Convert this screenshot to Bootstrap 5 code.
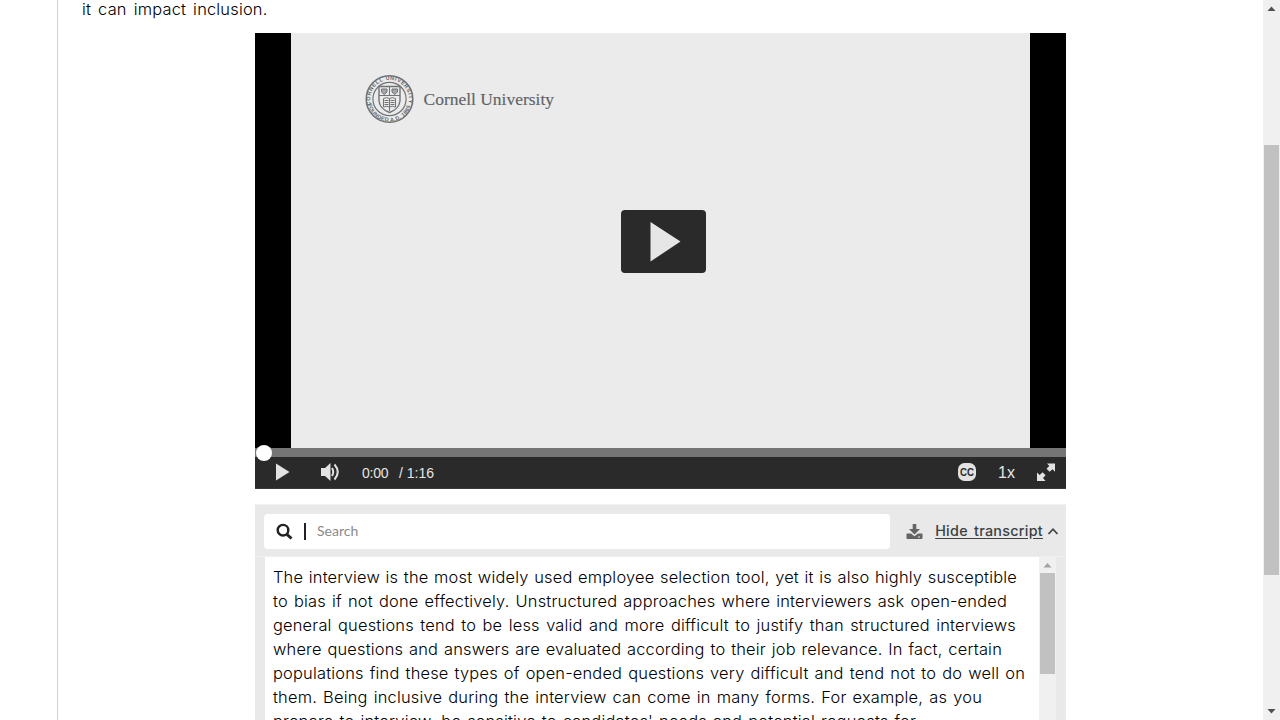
<!DOCTYPE html>
<html lang="en">
<head>
<meta charset="utf-8">
<meta name="viewport" content="width=device-width, initial-scale=1">
<title>Interview inclusion</title>
<link href="https://cdn.jsdelivr.net/npm/bootstrap@5.3.0/dist/css/bootstrap.min.css" rel="stylesheet">
<style>
body{font-family:Inter,"Open Sans",sans-serif;color:#111;font-size:16px;line-height:24px}
svg{display:block;flex:none}
.page{height:720px}
.rail{width:58px;border-right:1px solid #d2d2d2}
.main-col{min-width:0}
.intro{margin:-3px 0 0 24px;height:24px;width:185.5px}
.ln{display:block;white-space:nowrap;text-align:justify;text-align-last:justify;font-size:16.4px;font-weight:300;color:#000;letter-spacing:.2px}
.player{width:811px;height:456px;margin:12px 0 0 197px;background:#000}
.stage{width:739px;height:415px;margin-left:36px;background:#ebebeb}
.brand{padding:41px 0 0 74px}
.uni{font-family:"Palatino Linotype","Liberation Serif",serif}
.bigplay{left:330.4px;top:177px;width:84.6px;height:63px;border-radius:4px;background:#2a2a2a}
.track{height:9px;background:#757575}
.knob{left:1px;top:-3px;width:16px;height:16px;background:#fff}
.controls{height:32px;background:#2a2a2a;color:#e6e6e6;border-bottom:1px solid #3a3a3a;font-family:"Liberation Sans",sans-serif;font-size:14px;padding:0 10px 1px 20px}
.transcript{width:811px;height:216px;margin:15px 0 0 197px;background:#e9e9e9;border-top:1px solid #f1f1f1}
.tools{height:52px;padding:9px 7px 7px 9px;border-bottom:1px solid #efefef}
.search{width:627px;height:35px;border-radius:4px;background:#fff;padding:0 0 1px 12px}
.caret{width:2px;height:17px;background:#222;margin-left:11px}
.hint{font-family:Lato,sans-serif;font-size:14px;color:#8b8b8b;margin-left:11px}
.toggle{font-size:14.3px;font-weight:500;color:#3b4144;text-decoration:underline;text-underline-offset:2px;width:108px;margin:-2px 0 0 12px;white-space:nowrap;text-align-last:justify;letter-spacing:.3px}
.copy{width:774px;padding:8px 0 0 8px;background:#fff}
.sb{width:17px;background:#f0f0f0}
.thumb{width:15px;background:#c1c1c1}
.l1{width:744px}.l2{width:734px}.l3{width:743px}.l4{width:729px}.l5{width:752px}.l6{width:709px}.l7{width:643px}
</style>
</head>
<body class="overflow-hidden">
<div class="page d-flex overflow-hidden">
  <aside class="rail flex-shrink-0"></aside>
  <main class="main-col flex-grow-1">
    <p class="intro ln">it can impact inclusion.</p>
    <section class="player">
      <div class="stage position-relative">
        <div class="brand">
          <svg width="200" height="52" viewBox="365 74 200 52">
            <defs><path id="up" d="M371.1 105A19.300 19.300 0 1 1 407.9 105"/><path id="dn" d="M367.700 104A22.300 22.300 0 0 0 411.300 104"/></defs>
            <g fill="none" stroke="#707375">
              <circle cx="389.5" cy="99" r="23.3" stroke-width="1.5"/><circle cx="389.5" cy="99" r="16.6" stroke-width="1.2"/>
              <path d="M379 86.500H400V101Q399 109 389.500 112.500Q380 109 379 101Z" stroke-width="1.4"/>
              <path d="M379 95.500H400M389.500 87V96M383.500 98.500Q387 96.800 389.500 98.500Q392 96.800 395.500 98.500V107Q392 105.500 389.500 107Q387 105.500 383.500 107ZM389.500 98.500V111M384.500 100.500H388.500M390.500 100.500H394.500M384.500 102.500H388.500M390.500 102.500H394.500M384.500 104.500H388.500M390.500 104.500H394.500"/>
              <path d="M381.500 89H387V92L384.200 94.500L381.500 92ZM392 89H397.500V92L394.700 94.500L392 92Z" fill="#a4a6a7"/>
            </g>
            <g font-family="Liberation Sans" font-weight="700" font-size="5.5" fill="#66696b">
              <text><textPath href="#up" textLength="70">CORNELL UNIVERSITY</textPath></text>
              <text><textPath href="#dn" textLength="58">FOUNDED A.D. 1865</textPath></text>
            </g>
            <text class="uni" x="423.500" y="105" font-size="17.500" textLength="130.500" lengthAdjust="spacingAndGlyphs" fill="#606366" stroke="#606366" stroke-width=".15">Cornell University</text>
          </svg>
        </div>
        <div class="bigplay position-absolute"><svg width="84" height="63"><path d="M29.500 12V51.500L59.500 31.500Z" fill="#e6e6e6"/></svg></div>
      </div>
      <div class="track position-relative"><span class="knob position-absolute rounded-circle"></span></div>
      <div class="controls d-flex align-items-center">
        <svg width="16" height="18"><path d="M1 .5V17.500L14.500 9Z" fill="#e2e2e2"/></svg>
        <svg width="20" height="20" viewBox="0 0 20 20" style="margin-left:29px"><path d="M1 6H5L10.500 1V19L5 14H1Z" fill="#e2e2e2"/><path d="M12 6Q14.500 10 12 14M14.500 2.500Q21 10 14.500 17.500" fill="none" stroke="#e2e2e2" stroke-width="2"/></svg>
        <svg width="80" height="24" style="margin-left:21px" fill="#e6e6e6" font-size="14"><text x="1" y="17.500" textLength="26.500" lengthAdjust="spacing">0:00</text><text x="38" y="17.500" textLength="35" lengthAdjust="spacing">/ 1:16</text></svg>
        <svg class="ms-auto" width="18" height="18"><rect width="18" height="18" rx="6.500" fill="#e2e2e2"/><text x="2" y="12.800" font-size="10.500" font-weight="700" textLength="14" lengthAdjust="spacingAndGlyphs" fill="#2a2a2a">CC</text></svg>
        <svg width="20" height="24" style="margin-left:22px" fill="#e6e6e6"><text x="0" y="18" font-size="16" textLength="17">1x</text></svg>
        <svg width="19" height="18" viewBox="0 0 19 18" style="margin-left:19px" fill="#e2e2e2"><path d="M10 .5H18V8.800L15.500 6.300L12.600 8.700L9.500 5.700L12.300 3ZM0 9.500L2.700 12L5.600 9.200L8.600 12.200L6 15L8.500 18H0Z"/></svg>
      </div>
    </section>
    <section class="transcript">
      <div class="tools d-flex align-items-center">
        <div class="search d-flex align-items-center">
          <svg width="17" height="17" fill="none" stroke="#222"><circle cx="7" cy="7.200" r="5.300" stroke-width="2.400"/><path d="M11 11.500L15.500 15.500" stroke-width="3"/></svg>
          <span class="caret"></span><span class="hint">Search</span>
        </div>
        <svg width="17" height="17" style="margin-left:16px" fill="#646464"><path d="M6.700 1H10.300V6H14L8.500 11.500L3 6H6.700ZM1 10.500H5L8.500 13.300L12 10.500H16Q16.500 10.500 16.500 11V15Q16.500 16 15.500 16H1.500Q.5 16 .5 15V11Q.5 10.500 1 10.500Z"/><path d="M12 13.500H14V14.500H12Z" fill="#e9e9e9"/></svg>
        <a class="toggle" href="#">Hide transcript</a>
        <svg width="12" height="9" style="margin-left:4px"><path d="M1.500 7L6 2.200L10.500 7" fill="none" stroke="#444" stroke-width="1.800"/></svg>
      </div>
      <div class="d-flex h-100" style="padding-left:10px">
        <div class="copy">
          <span class="ln l1">The interview is the most widely used employee selection tool, yet it is also highly susceptible</span>
          <span class="ln l2">to bias if not done effectively. Unstructured approaches where interviewers ask open-ended</span>
          <span class="ln l3">general questions tend to be less valid and more difficult to justify than structured interviews</span>
          <span class="ln l4">where questions and answers are evaluated according to their job relevance. In fact, certain</span>
          <span class="ln l5">populations find these types of open-ended questions very difficult and tend not to do well on</span>
          <span class="ln l6">them. Being inclusive during the interview can come in many forms. For example, as you</span>
          <span class="ln l7">prepare to interview, be sensitive to candidates' needs and potential requests for</span>
        </div>
        <div class="sb d-flex flex-column align-items-center">
          <svg width="17" height="16"><path d="M4.500 10.500L8.500 6L12.500 10.500Z" fill="#a3a3a3"/></svg>
          <div class="thumb" style="height:101px"></div>
        </div>
      </div>
    </section>
  </main>
  <div class="sb flex-shrink-0 d-flex flex-column align-items-center">
    <svg width="17" height="145"><path d="M4.500 11L8.500 6.500L12.500 11Z" fill="#505050"/></svg>
    <div class="thumb" style="height:430px"></div>
    <svg class="mt-auto" width="17" height="17"><path d="M4.500 6L8.500 10.500L12.500 6Z" fill="#505050"/></svg>
  </div>
</div>
<script src="https://cdn.jsdelivr.net/npm/bootstrap@5.3.0/dist/js/bootstrap.bundle.min.js"></script>
</body>
</html>
